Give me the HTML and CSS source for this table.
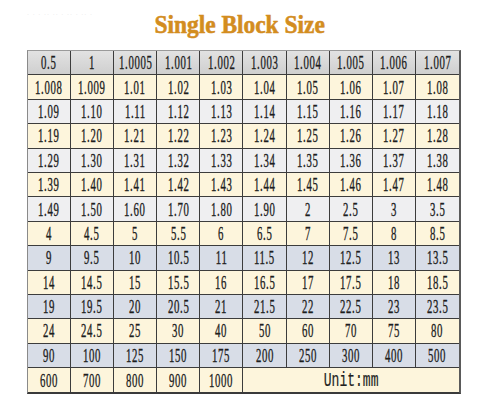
FILE: index.html
```html
<!DOCTYPE html>
<html>
<head>
<meta charset="utf-8">
<link rel="stylesheet" href="styles.css">
</head>
<body>
<div class="page">
  <div class="faint">· · · ·· ·· · ·· · ·· ·</div>
  <h1 class="title"><span>Single Block Size</span></h1>
  <div class="grid">
    <div class="c h"><span>0.5</span></div><div class="c h"><span>1</span></div><div class="c h"><span>1.0005</span></div><div class="c h"><span>1.001</span></div><div class="c h"><span>1.002</span></div><div class="c h"><span>1.003</span></div><div class="c h"><span>1.004</span></div><div class="c h"><span>1.005</span></div><div class="c h"><span>1.006</span></div><div class="c h"><span>1.007</span></div>
    <div class="c y"><span>1.008</span></div><div class="c y"><span>1.009</span></div><div class="c y"><span>1.01</span></div><div class="c y"><span>1.02</span></div><div class="c y"><span>1.03</span></div><div class="c y"><span>1.04</span></div><div class="c y"><span>1.05</span></div><div class="c y"><span>1.06</span></div><div class="c y"><span>1.07</span></div><div class="c y"><span>1.08</span></div>
    <div class="c g"><span>1.09</span></div><div class="c g"><span>1.10</span></div><div class="c g"><span>1.11</span></div><div class="c g"><span>1.12</span></div><div class="c g"><span>1.13</span></div><div class="c g"><span>1.14</span></div><div class="c g"><span>1.15</span></div><div class="c g"><span>1.16</span></div><div class="c g"><span>1.17</span></div><div class="c g"><span>1.18</span></div>
    <div class="c y"><span>1.19</span></div><div class="c y"><span>1.20</span></div><div class="c y"><span>1.21</span></div><div class="c y"><span>1.22</span></div><div class="c y"><span>1.23</span></div><div class="c y"><span>1.24</span></div><div class="c y"><span>1.25</span></div><div class="c y"><span>1.26</span></div><div class="c y"><span>1.27</span></div><div class="c y"><span>1.28</span></div>
    <div class="c g"><span>1.29</span></div><div class="c g"><span>1.30</span></div><div class="c g"><span>1.31</span></div><div class="c g"><span>1.32</span></div><div class="c g"><span>1.33</span></div><div class="c g"><span>1.34</span></div><div class="c g"><span>1.35</span></div><div class="c g"><span>1.36</span></div><div class="c g"><span>1.37</span></div><div class="c g"><span>1.38</span></div>
    <div class="c y"><span>1.39</span></div><div class="c y"><span>1.40</span></div><div class="c y"><span>1.41</span></div><div class="c y"><span>1.42</span></div><div class="c y"><span>1.43</span></div><div class="c y"><span>1.44</span></div><div class="c y"><span>1.45</span></div><div class="c y"><span>1.46</span></div><div class="c y"><span>1.47</span></div><div class="c y"><span>1.48</span></div>
    <div class="c g"><span>1.49</span></div><div class="c g"><span>1.50</span></div><div class="c g"><span>1.60</span></div><div class="c g"><span>1.70</span></div><div class="c g"><span>1.80</span></div><div class="c g"><span>1.90</span></div><div class="c g"><span>2</span></div><div class="c g"><span>2.5</span></div><div class="c g"><span>3</span></div><div class="c g"><span>3.5</span></div>
    <div class="c y"><span>4</span></div><div class="c y"><span>4.5</span></div><div class="c y"><span>5</span></div><div class="c y"><span>5.5</span></div><div class="c y"><span>6</span></div><div class="c y"><span>6.5</span></div><div class="c y"><span>7</span></div><div class="c y"><span>7.5</span></div><div class="c y"><span>8</span></div><div class="c y"><span>8.5</span></div>
    <div class="c b"><span>9</span></div><div class="c b"><span>9.5</span></div><div class="c b"><span>10</span></div><div class="c b"><span>10.5</span></div><div class="c b"><span>11</span></div><div class="c b"><span>11.5</span></div><div class="c b"><span>12</span></div><div class="c b"><span>12.5</span></div><div class="c b"><span>13</span></div><div class="c b"><span>13.5</span></div>
    <div class="c y"><span>14</span></div><div class="c y"><span>14.5</span></div><div class="c y"><span>15</span></div><div class="c y"><span>15.5</span></div><div class="c y"><span>16</span></div><div class="c y"><span>16.5</span></div><div class="c y"><span>17</span></div><div class="c y"><span>17.5</span></div><div class="c y"><span>18</span></div><div class="c y"><span>18.5</span></div>
    <div class="c b"><span>19</span></div><div class="c b"><span>19.5</span></div><div class="c b"><span>20</span></div><div class="c b"><span>20.5</span></div><div class="c b"><span>21</span></div><div class="c b"><span>21.5</span></div><div class="c b"><span>22</span></div><div class="c b"><span>22.5</span></div><div class="c b"><span>23</span></div><div class="c b"><span>23.5</span></div>
    <div class="c y"><span>24</span></div><div class="c y"><span>24.5</span></div><div class="c y"><span>25</span></div><div class="c y"><span>30</span></div><div class="c y"><span>40</span></div><div class="c y"><span>50</span></div><div class="c y"><span>60</span></div><div class="c y"><span>70</span></div><div class="c y"><span>75</span></div><div class="c y"><span>80</span></div>
    <div class="c b"><span>90</span></div><div class="c b"><span>100</span></div><div class="c b"><span>125</span></div><div class="c b"><span>150</span></div><div class="c b"><span>175</span></div><div class="c b"><span>200</span></div><div class="c b"><span>250</span></div><div class="c b"><span>300</span></div><div class="c b"><span>400</span></div><div class="c b"><span>500</span></div>
    <div class="c y"><span>600</span></div><div class="c y"><span>700</span></div><div class="c y"><span>800</span></div><div class="c y"><span>900</span></div><div class="c y"><span>1000</span></div><div class="c y unit"><span>Unit:mm</span></div>
  </div>
</div>
</body>
</html>
```
FILE: styles.css
```css
html, body {
  margin: 0;
  padding: 0;
  background: #ffffff;
}
.page {
  position: relative;
  width: 488px;
  height: 420px;
}
.faint {
  position: absolute;
  left: 27px;
  top: 11px;
  font: 6px "Liberation Sans", sans-serif;
  color: #dcdcdc;
  letter-spacing: 1px;
}
.title {
  margin: 0;
  padding-top: 10px;
  height: 39px;
  box-sizing: border-box;
  text-align: center;
  font: bold 26px/30px "Liberation Serif", serif;
  color: #d38d1f;
}
.title span {
  display: inline-block;
  transform: scaleX(0.9);
  margin-left: -8px;
  -webkit-text-stroke: 0.6px #d38d1f;
}
.grid {
  margin-left: 27px;
  width: 434px;
  display: grid;
  grid-template-columns: repeat(10, minmax(0, 1fr));
  grid-auto-rows: 24.4px;
  border-top: 1px solid #9a9a9a;
  border-left: 1px solid #8a8a8a;
  border-right: 2px solid #5a5a5a;
  border-bottom: 2px solid #3a3a3a;
  box-sizing: border-box;
  margin-top: 11px;
}
.c {
  border-right: 1px solid #3c3c3c;
  border-bottom: 1px solid #3c3c3c;
  display: flex;
  align-items: center;
  justify-content: center;
  font: 18px/1 "Liberation Serif", serif;
  color: #1e1e1e;
  white-space: nowrap;
  min-width: 0;
}
.c span {
  display: inline-block;
  flex: none;
  letter-spacing: 1px;
  transform: scaleX(0.6);
  margin-top: 1px;
  -webkit-text-stroke: 0.35px #1e1e1e;
}
.c:nth-child(10n) {
  border-right: none;
}
.h { background: linear-gradient(#e2e2e2, #cfcfcf); }
.y { background: #fdf5dc; }
.g { background: #efeff1; }
.b { background: #d8dde7; }
.unit {
  grid-column: span 5;
  border-right: none;
}
.unit span {
  font-size: 21px;
  font-family: "Liberation Mono", monospace;
  letter-spacing: 0;
  transform: scaleX(0.62);
  -webkit-text-stroke: 0.2px #1e1e1e;
}
.grid > .c:nth-last-child(-n+6) {
  border-bottom: none;
}
```
